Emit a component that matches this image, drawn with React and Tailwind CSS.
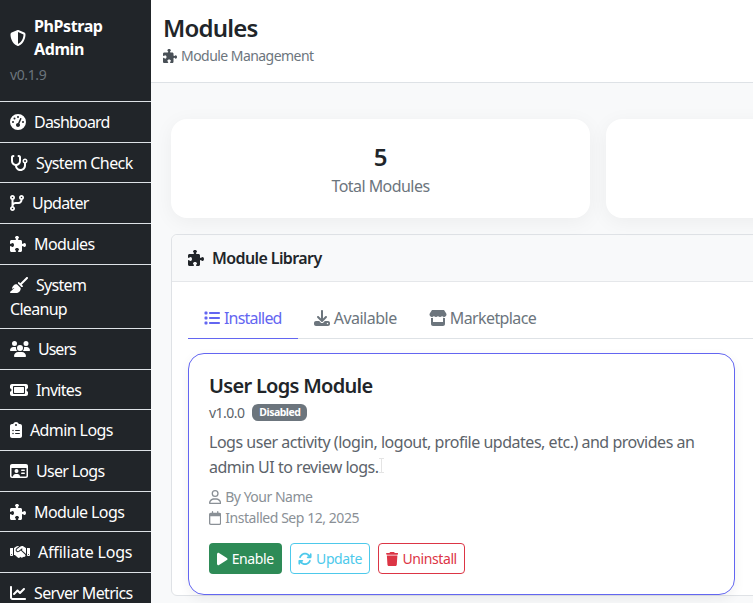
import React from "react";
import {
  FaShieldHalved, FaGaugeHigh, FaStethoscope, FaCodeBranch, FaPuzzlePiece, FaBroom, FaUsers, FaTicket,
  FaClipboardList, FaRegIdCard, FaHandshake, FaChartLine, FaList, FaDownload, FaStore, FaRegUser, FaRegCalendar,
  FaPlay, FaArrowsRotate, FaTrash,
} from "react-icons/fa6";

const nav = [
  [FaGaugeHigh, "Dashboard", "tracking-[-0.8px]", "w-[16px]"],
  [FaStethoscope, "System Check", "tracking-[-0.6px]", "w-[18px]"],
  [FaCodeBranch, "Updater", "tracking-[-0.75px]", "w-[14px]"],
  [FaPuzzlePiece, "Modules", "tracking-[-0.6px]", "w-[16px]"],
  [FaBroom, "System Cleanup", "tracking-[-0.7px]", "w-[18px]"],
  [FaUsers, "Users", "tracking-[-1px]", "w-[20px]"],
  [FaTicket, "Invites", "tracking-[-0.7px]", "w-[18px]"],
  [FaClipboardList, "Admin Logs", "tracking-[-0.6px]", "w-[12px]"],
  [FaRegIdCard, "User Logs", "tracking-[-0.7px]", "w-[18px]"],
  [FaPuzzlePiece, "Module Logs", "tracking-[-0.6px]", "w-[16px]"],
  [FaHandshake, "Affiliate Logs", "tracking-[-0.2px]", "w-[20px]"],
  [FaChartLine, "Server Metrics", "tracking-[-0.65px]", "w-[16px]"],
];

function Stat({ value, label }) {
  return (
    <div className="w-[419px] h-[99px] shrink-0 bg-white rounded-2xl shadow-[0_4px_20px_rgba(0,0,0,0.05)] flex flex-col items-center justify-center pt-[2px]">
      {value && <div className="text-[24px] leading-[29px] font-semibold text-[#212529]">{value}</div>}
      {label && <div className="text-[16px] leading-6 text-[#6c757d] mt-[3px] tracking-[-0.55px]">{label}</div>}
    </div>
  );
}

export default function App() {
  return (
    <div className="w-[753px] h-[603px] overflow-hidden flex bg-[#f8f9fa] text-[#212529] font-['Noto_Sans',sans-serif] tracking-[-0.4px]">
      <aside className="w-[151px] shrink-0 bg-[#212529] text-white">
        <div className="h-[102px] border-b border-[#dee2e6] pl-[10px] pt-[15px]">
          <div className="flex items-center gap-[8px] font-bold text-[16px] leading-[23px]">
            <FaShieldHalved className="h-4 w-4 shrink-0" />
            <span>PhPstrap<br />Admin</span>
          </div>
          <div className="text-[14px] leading-[21px] text-[#6c757d] mt-[3px]">v0.1.9</div>
        </div>
        <nav>
          {nav.map(([Icon, label, track, w]) => (
            <a key={label} className={`block border-b border-[#dee2e6] pl-[10px] pr-2 pt-[7.95px] pb-[7.71px] text-[16px] leading-6 ${track}`}>
              <Icon className={`inline-block h-4 ${w} mr-[8px] align-[-2px]`} />
              {label}
            </a>
          ))}
        </nav>
      </aside>
      <main className="flex-1 min-w-0">
        <header className="h-[83px] bg-white border-b border-[#dee2e6] pl-[12px] pt-[11px]">
          <h1 className="text-[24px] leading-[34px] font-semibold tracking-[-0.8px]">Modules</h1>
          <div className="text-[14px] leading-[21px] text-[#6c757d] flex items-center gap-[4px] tracking-[-0.55px]">
            <FaPuzzlePiece className="h-[14px] w-[14px] text-[#495057]" />
            Module Management
          </div>
        </header>
        <div className="pl-[20px] pt-[36px]">
          <div className="flex gap-[16px]">
            <Stat value="5" label="Total Modules" />
            <Stat />
          </div>
          <section className="mt-[16px] w-[800px] bg-white border border-[#dfe2e6] rounded-[6px]">
            <div className="h-[47px] bg-[#f8f9fa] border-b border-[#e5e7ea] rounded-t-[6px] flex items-center pl-[16px] gap-[8px] font-semibold text-[16px] tracking-[-0.6px]">
              <FaPuzzlePiece className="h-4 w-4" />
              Module Library
            </div>
            <div className="pl-[16px] pt-[16px]">
              <div className="w-[784px] flex border-b border-[#dee2e6] h-[41px] text-[16px] text-[#6c757d]">
                <div className="px-4 -mb-px border-b border-[#6366f1] text-[#6366f1] flex items-center gap-[4px] tracking-[-0.8px]">
                  <FaList className="h-4 w-4" />Installed
                </div>
                <div className="px-4 flex items-center gap-[4px] tracking-[-0.5px]">
                  <FaDownload className="h-4 w-4" />Available
                </div>
                <div className="px-4 flex items-center gap-[3px] tracking-[-0.6px]">
                  <FaStore className="h-4 w-[18px]" />Marketplace
                </div>
              </div>
              <article className="mt-[14px] w-[547px] h-[242px] border border-[#6366f1] rounded-2xl bg-white shadow-[0_4px_12px_rgba(0,0,0,0.06)] pl-[20px] pt-[20px]">
                <h3 className="text-[20px] leading-[24px] font-semibold tracking-[-0.7px]">User Logs Module</h3>
                <div className="flex items-center gap-[8px] mt-[4px] text-[14px] leading-[21px] text-[#5c636a] tracking-[-0.55px]">
                  v1.0.0
                  <span className="bg-[#6c757d] text-white text-[10.5px] leading-none font-bold rounded-[6px] px-[7px] py-[3px] tracking-[-0.5px]">Disabled</span>
                </div>
                <p className="mt-[7px] w-[500px] text-[16px] leading-[25px] text-[#5c636a] tracking-[-0.48px]">
                  Logs user activity (login, logout, profile updates, etc.) and provides an admin UI to review logs.
                  <span className="relative">
                    <svg viewBox="0 0 7 15" className="absolute left-[-1px] top-[2px] w-[7px] h-[15px]" fill="none" stroke="#e4e4e4" strokeWidth="1">
                      <path d="M1 .5h5M3.5.5v14M1 14.5h5" />
                    </svg>
                  </span>
                </p>
                <div className="mt-[6px] text-[14px] leading-[21px] text-[#8a9096] flex items-center gap-[4px] tracking-[-0.5px]">
                  <FaRegUser className="h-[14px] w-[12.25px]" />By Your Name
                </div>
                <div className="text-[14px] leading-[21px] text-[#8a9096] flex items-center gap-[4px] tracking-[-0.45px]">
                  <FaRegCalendar className="h-[14px] w-[12.25px]" />Installed Sep 12, 2025
                </div>
                <div className="flex gap-[8px] mt-[15px] text-[14px]">
                  <button className="h-[31px] w-[73px] rounded-[4px] bg-[#2e8b57] text-white flex items-center justify-center gap-[4px]">
                    <FaPlay className="h-[14px] w-[10.5px]" />Enable
                  </button>
                  <button className="h-[31px] w-[80px] rounded-[4px] border border-[#4dc9eb] text-[#4dc9eb] flex items-center justify-center gap-[4px]">
                    <FaArrowsRotate className="h-[14px] w-[14px]" />Update
                  </button>
                  <button className="h-[31px] w-[87px] rounded-[4px] border border-[#dc3545] text-[#dc3545] flex items-center justify-center gap-[4px]">
                    <FaTrash className="h-[14px] w-[12.25px]" />Uninstall
                  </button>
                </div>
              </article>
            </div>
          </section>
        </div>
      </main>
    </div>
  );
}
